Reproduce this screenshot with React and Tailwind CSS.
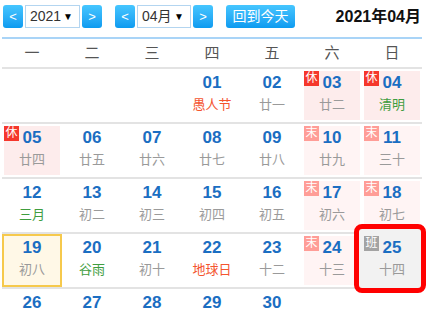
import React from "react";

const WEEKDAYS = ["一", "二", "三", "四", "五", "六", "日"];

// tag: "rest" (休), "weekend" (末), "work" (班); tone: "red" | "green" for festival names
const WEEKS = [
  [
    null,
    null,
    null,
    { d: "01", l: "愚人节", tone: "red" },
    { d: "02", l: "廿一" },
    { d: "03", l: "廿二", tag: "rest" },
    { d: "04", l: "清明", tone: "green", tag: "rest" },
  ],
  [
    { d: "05", l: "廿四", tag: "rest" },
    { d: "06", l: "廿五" },
    { d: "07", l: "廿六" },
    { d: "08", l: "廿七" },
    { d: "09", l: "廿八" },
    { d: "10", l: "廿九", tag: "weekend" },
    { d: "11", l: "三十", tag: "weekend" },
  ],
  [
    { d: "12", l: "三月", tone: "green" },
    { d: "13", l: "初二" },
    { d: "14", l: "初三" },
    { d: "15", l: "初四" },
    { d: "16", l: "初五" },
    { d: "17", l: "初六", tag: "weekend" },
    { d: "18", l: "初七", tag: "weekend" },
  ],
  [
    { d: "19", l: "初八", today: true },
    { d: "20", l: "谷雨", tone: "green" },
    { d: "21", l: "初十" },
    { d: "22", l: "地球日", tone: "red" },
    { d: "23", l: "十二" },
    { d: "24", l: "十三", tag: "weekend" },
    { d: "25", l: "十四", tag: "work", marked: true },
  ],
  [
    { d: "26", l: "十五" },
    { d: "27", l: "十六" },
    { d: "28", l: "十七" },
    { d: "29", l: "十八" },
    { d: "30", l: "十九" },
    null,
    null,
  ],
];

const TAGS = {
  rest: { text: "休", badge: "bg-[#f5372c]", cell: "bg-[#fdecec]" },
  weekend: { text: "末", badge: "bg-[#ff9d97]", cell: "bg-[#fff4f4]" },
  work: { text: "班", badge: "bg-[#a3a3a3]", cell: "bg-[#f2f2f2]" },
};

const TONES = {
  red: "text-[#f4552f]",
  green: "text-[#3f9d3f]",
};

function NavButton({ children }) {
  return (
    <div className="w-[20px] h-[23px] rounded-[3px] bg-linear-to-b from-[#45c6ff] to-[#0b9bf0] text-white text-[13px] flex items-center justify-center">
      {children}
    </div>
  );
}

function FakeSelect({ value, width }) {
  return (
    <div
      className={`${width} h-[23px] border border-[#b3d5f0] bg-white flex items-center justify-between pl-[4px] pr-[6px] text-[14px] text-[#333]`}
    >
      <span>{value}</span>
      <span className="text-[10px] text-black">▼</span>
    </div>
  );
}

function DayCell({ day }) {
  if (!day) return <div />;
  const tag = day.tag ? TAGS[day.tag] : null;
  const lunarColor = day.tone ? TONES[day.tone] : "text-[#9a9a9a]";

  const inner = (
    <>
      {tag && (
        <span
          className={`absolute left-0 top-0 z-10 w-[15px] h-[15px] ${tag.badge} text-white text-[12px] leading-[15px] text-center`}
        >
          {tag.text}
        </span>
      )}
      <div className="relative z-10 pt-[2px] text-[17px] leading-[20px] font-bold text-[#1b6ec2] text-center">
        {day.d}
      </div>
      <div className={`relative z-10 mt-[3px] text-[13px] leading-[18px] text-center ${lunarColor}`}>
        {day.l}
      </div>
    </>
  );

  if (day.today) {
    return (
      <div className="relative h-full border-2 border-[#f6c94c] bg-[#fff8e7]">{inner}</div>
    );
  }

  return (
    <div className="relative h-full p-[2px]">
      {day.marked && (
        <div className="absolute -left-[8px] -right-[4px] -top-[10px] -bottom-[6px] z-0 border-[5px] border-[#ff0000] rounded-[8px] bg-[#f2f2f2]" />
      )}
      <div className={`relative h-full ${tag ? tag.cell : ""}`}>{inner}</div>
    </div>
  );
}

export default function App() {
  return (
    <div className="w-[430px] h-[318px] overflow-hidden bg-white font-['Liberation_Sans','Noto_Sans_CJK_SC',sans-serif]">
      <div className="mt-[5px] pl-[3px] pr-[9px] h-[23px] flex items-center">
        <div className="flex items-center gap-[2px]">
          <NavButton>&lt;</NavButton>
          <FakeSelect value="2021" width="w-[55px]" />
          <NavButton>&gt;</NavButton>
        </div>
        <div className="ml-[13px] flex items-center gap-[2px]">
          <NavButton>&lt;</NavButton>
          <FakeSelect value="04月" width="w-[54px]" />
          <NavButton>&gt;</NavButton>
        </div>
        <div className="ml-[13px] w-[69px] h-[23px] rounded-[3px] bg-linear-to-b from-[#45c6ff] to-[#0b9bf0] text-white text-[14px] flex items-center justify-center">
          回到今天
        </div>
        <div className="ml-auto text-[16px] font-bold text-[#111]">2021年04月</div>
      </div>

      <div className="mt-[9px] ml-[2px] w-[420px] border-t-2 border-[#a9d4f7]">
        <div className="grid grid-cols-7 h-[30px] border-b-2 border-[#e3e3e3]">
          {WEEKDAYS.map((w) => (
            <div key={w} className="flex items-center justify-center text-[15px] text-[#555]">
              {w}
            </div>
          ))}
        </div>
        {WEEKS.map((week, i) => (
          <div key={i} className="grid grid-cols-7 h-[55px] border-b-2 border-[#e3e3e3]">
            {week.map((day, j) => (
              <DayCell key={j} day={day} />
            ))}
          </div>
        ))}
      </div>
    </div>
  );
}
